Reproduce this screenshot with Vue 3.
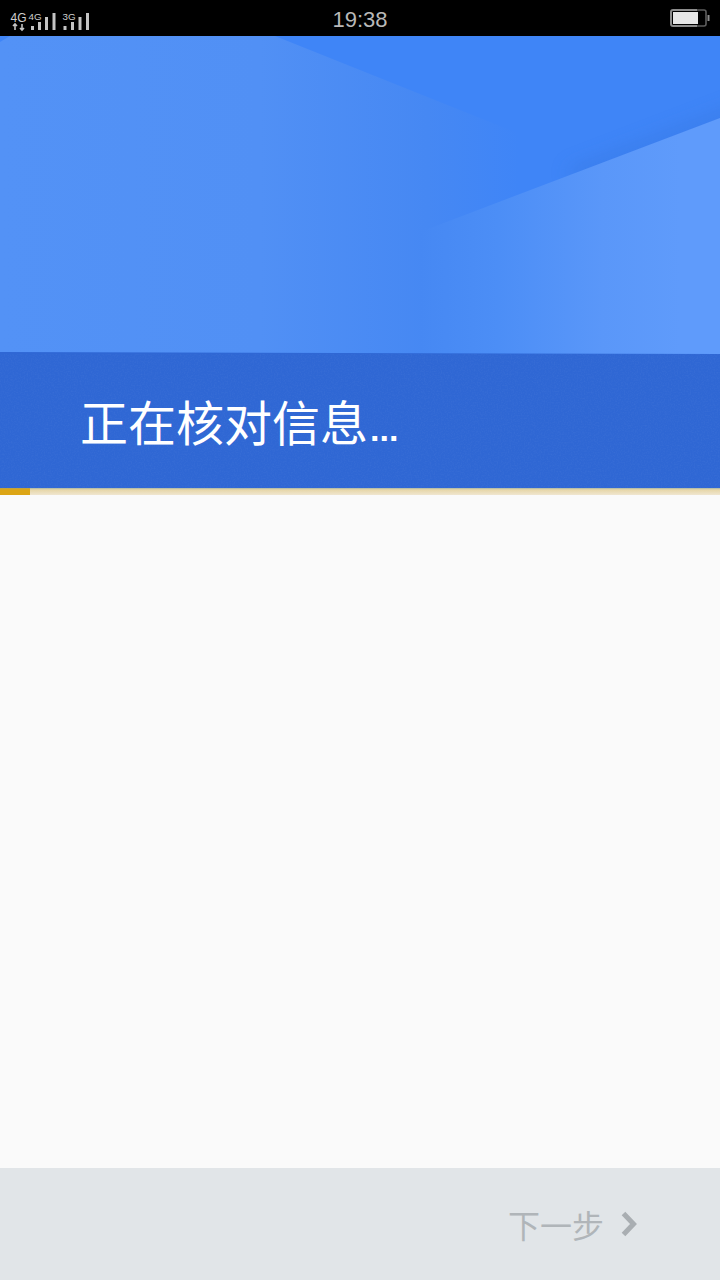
<template>
    <div class="page">
        <div class="status-bar">
            <svg class="signal" width="90" height="28" viewBox="0 0 90 28">
                <g class="net-text">
                    <text x="10.5" y="17.5" font-size="12">4G</text>
                    <text x="28.5" y="15.5" font-size="9.8">4G</text>
                    <text x="62.5" y="15.5" font-size="9.8">3G</text>
                </g>
                <path d="M15 20v6M13 22l2-2 2 2M22 20v6M20 24l2 2 2-2" class="arrows" />
                <g fill="#c4c4c4">
                    <rect x="31" y="22" width="3" height="4" />
                    <rect x="38" y="18" width="3" height="8" />
                    <rect x="45" y="13" width="3" height="13" />
                    <rect x="52.5" y="9" width="3" height="17" />
                    <rect x="63.5" y="22" width="3" height="4" />
                    <rect x="71" y="18" width="3" height="8" />
                    <rect x="78.5" y="13" width="3" height="13" />
                    <rect x="86" y="9" width="3" height="17" />
                </g>
            </svg>
            <span class="time">19:38</span>
            <svg class="battery" width="40" height="20" viewBox="0 0 40 20">
                <path d="M27 2H3a2 2 0 0 0-2 2v12a2 2 0 0 0 2 2h24" fill="none" stroke="#8c8c8c" stroke-width="2" />
                <path d="M27 2h7a2 2 0 0 1 2 2v12a2 2 0 0 1-2 2h-7" fill="none" stroke="#5e5e5e" stroke-width="1.6" />
                <rect x="3" y="4" width="25" height="12" fill="#e6e6e6" />
                <rect x="37.5" y="7" width="2" height="6" fill="#8c8c8c" />
            </svg>
        </div>

        <div class="hero">
            <svg class="hero-bg" width="720" height="318" viewBox="0 0 720 318">
                <defs>
                    <linearGradient id="leftFill" gradientUnits="userSpaceOnUse" x1="0" y1="0" x2="520" y2="0">
                        <stop offset="0" stop-color="#5392f6" />
                        <stop offset="0.5" stop-color="#5190f5" />
                        <stop offset="0.82" stop-color="#4688f3" />
                        <stop offset="1" stop-color="#3f85f7" />
                    </linearGradient>
                    <linearGradient id="rightFill" gradientUnits="userSpaceOnUse" x1="420" y1="0" x2="680" y2="0">
                        <stop offset="0" stop-color="#4688f3" />
                        <stop offset="0.3" stop-color="#4c8ef6" />
                        <stop offset="0.7" stop-color="#5a97f9" />
                        <stop offset="1" stop-color="#5f9bfb" />
                    </linearGradient>
                    <filter id="soft" x="-20%" y="-100%" width="140%" height="300%">
                        <feGaussianBlur stdDeviation="9" />
                    </filter>
                </defs>
                <rect width="720" height="318" fill="#3f85f7" />
                <path d="M570 139L740 74" stroke="#3473dc" stroke-width="12" opacity="0.5" filter="url(#soft)" />
                <polygon points="0,6 10,0 275,0 520,98 520,318 0,318" fill="url(#leftFill)" />
                <polygon points="720,82 420,196 420,318 720,318" fill="url(#rightFill)" />
                <polygon points="0,316 720,318 0,318" fill="#2f67d4" />
            </svg>
        </div>

        <div class="band">
            <svg class="band-grain" width="720" height="134">
                <filter id="grain">
                    <feTurbulence type="fractalNoise" baseFrequency="0.7" numOctaves="2" seed="4" />
                    <feColorMatrix values="0 0 0 0 1  0 0 0 0 1  0 0 0 0 1  0.5 0 0 0 -0.2" />
                </filter>
                <rect width="720" height="134" filter="url(#grain)" opacity="0.16" />
            </svg>
            <h1 class="title">正在核对信息<span class="dots">...</span></h1>
        </div>

        <div class="progress">
            <div class="progress-fill" :style="{ width: progress + 'px' }"></div>
        </div>

        <div class="content"></div>

        <div class="footer">
            <div class="next">
                <span>下一步</span>
                <svg width="18" height="26" viewBox="0 0 18 26">
                    <path d="M3.5 2.5l10 10.5-10 10.5" fill="none" stroke="#a9aeb2" stroke-width="5" />
                </svg>
            </div>
        </div>
    </div>
</template>

<script setup>
import { ref } from 'vue'

const progress = ref(30)
</script>

<style>
html,
body {
    margin: 0;
    background: #fafafa;
}
</style>

<style scoped>
.page {
    display: flex;
    flex-direction: column;
    width: 720px;
    height: 1280px;
    overflow: hidden;
    font-family: "Liberation Sans", "Noto Sans CJK SC", sans-serif;
}

.status-bar {
    display: grid;
    grid-template-columns: 1fr auto 1fr;
    align-items: center;
    height: 36px;
    background: #000;
    color: #b8b8b8;
}

.signal {
    display: block;
}

.net-text {
    fill: #cfcfcf;
    font-family: "Liberation Sans", sans-serif;
}

.arrows {
    fill: none;
    stroke: #c4c4c4;
    stroke-width: 1.6;
}

.time {
    font-size: 22px;
    padding-top: 3px;
}

.battery {
    justify-self: end;
    margin-right: 10px;
}

.hero {
    height: 318px;
}

.hero-bg {
    display: block;
}

.band {
    position: relative;
    display: flex;
    align-items: center;
    height: 134px;
    padding-left: 80px;
    background: #2f67d4;
}

.band-grain {
    position: absolute;
    top: 0;
    left: 0;
}

.title {
    position: relative;
    margin: 0;
    font-size: 48px;
    font-weight: 400;
    color: #fff;
    padding-bottom: 2px;
}

.dots {
    font-size: 34px;
    font-weight: 700;
    margin-left: 2px;
}

.progress {
    height: 7px;
    background: linear-gradient(#a8b6a8, #e6d6a8 25%, #f0e6d0);
}

.progress-fill {
    height: 100%;
    background: linear-gradient(#b7a24f, #dca515 25%);
}

.content {
    flex: 1;
    background: #fafafa;
}

.footer {
    display: flex;
    justify-content: flex-end;
    align-items: center;
    height: 112px;
    padding-right: 82px;
    background: #e1e5e8;
}

.next {
    display: flex;
    align-items: center;
    gap: 16px;
    font-size: 32px;
    color: #b0b5b9;
}
</style>
